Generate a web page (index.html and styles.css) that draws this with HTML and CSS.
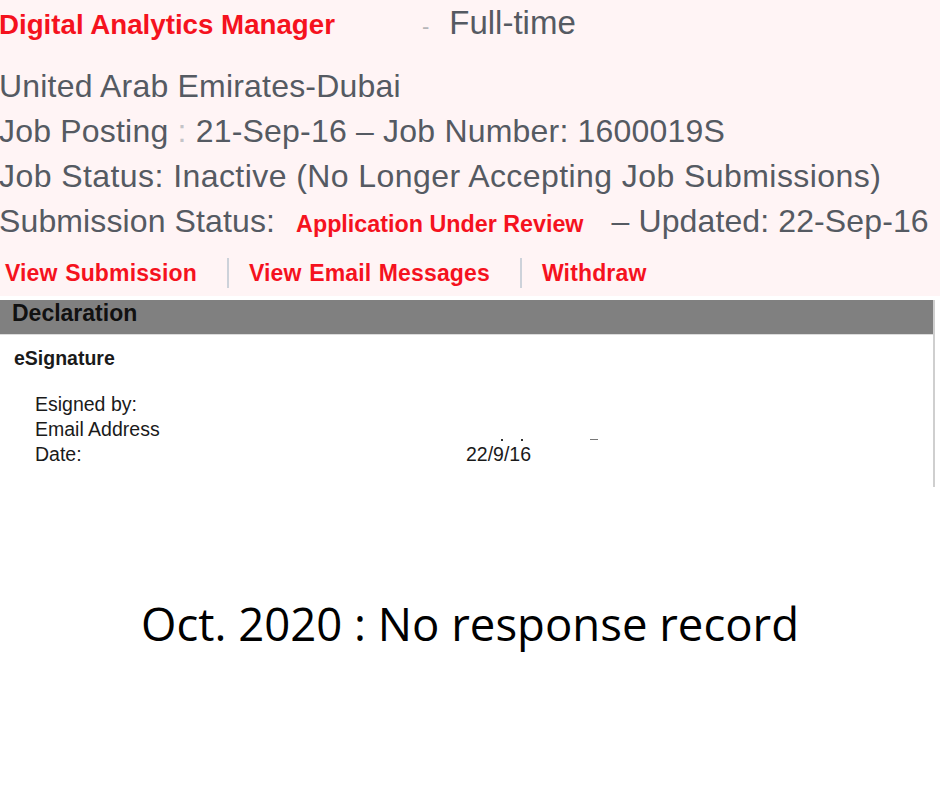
FILE: index.html
```html
<!DOCTYPE html>
<html lang="en">
<head>
    <meta charset="UTF-8">
    <meta name="viewport" content="width=device-width, initial-scale=1.0">
    <title>Job Submission</title>
    <link rel="stylesheet" href="styles.css">
</head>
<body>

    <div class="job">
        <div class="judul">
            <span class="nama-job">Digital Analytics Manager</span>
            <span class="strip">-</span>
            <span class="tipe">Full-time</span>
        </div>
        <div class="info">United Arab Emirates-Dubai</div>
        <div class="info">Job Posting <span class="titik">:</span> 21-Sep-16 &ndash; Job Number: 1600019S</div>
        <div class="info lebar">Job Status: Inactive (No Longer Accepting Job Submissions)</div>
        <div class="info sempit">Submission Status: <span class="status">Application Under Review</span> &ndash; Updated: 22-Sep-16</div>
        <div class="tautan">
            <a class="link">View Submission</a>
            <span class="pemisah"></span>
            <a class="link">View Email Messages</a>
            <span class="pemisah"></span>
            <a class="link">Withdraw</a>
        </div>
    </div>

    <div class="panel">
        <div class="panel-head">Declaration</div>
        <div class="sub-judul">eSignature</div>
        <div class="baris">
            <div>Esigned by:</div>
            <div></div>
            <div>Email Address</div>
            <div class="sisa"><i class="d1"></i><i class="d2"></i><i class="d3"></i></div>
            <div>Date:</div>
            <div>22/9/16</div>
        </div>
    </div>

    <div class="catatan">Oct. 2020 : No response record</div>

</body>
</html>
```

FILE: styles.css
```css
body {
    margin: 0;
    background: #fff;
    font-family: "Liberation Sans", Arial, sans-serif;
}

.job {
    background: #fff4f5;
    height: 296px;
    color: #555a62;
    overflow: hidden;
}

.judul {
    display: flex;
    align-items: baseline;
    height: 46px;
    line-height: 46px;
    margin-left: -1px;
}

.nama-job {
    color: #f5121e;
    font-weight: bold;
    font-size: 27.7px;
}

.strip {
    color: #b5b5b8;
    font-size: 22px;
    margin-left: 87px;
}

.tipe {
    font-size: 33px;
    margin-left: 20px;
}

.info {
    font-size: 32px;
    line-height: 45px;
    margin-left: -1px;
    letter-spacing: 0.2px;
    white-space: nowrap;
}

.info.lebar {
    letter-spacing: 0.43px;
}

.info.sempit {
    letter-spacing: 0.12px;
}

.judul + .info {
    margin-top: 18px;
}

.titik {
    color: #c4c4c8;
}

.status {
    color: #f5121e;
    font-weight: bold;
    font-size: 23.3px;
    letter-spacing: 0;
    margin: 0 19px 0 12px;
}

.tautan {
    display: flex;
    align-items: center;
    margin-top: 5px;
    height: 42px;
    padding-left: 5px;
}

.link {
    color: #f5121e;
    font-weight: bold;
    font-size: 23px;
    letter-spacing: 0.15px;
    word-spacing: 1px;
}

.pemisah {
    width: 2px;
    height: 30px;
    background: #cdd2da;
    margin: 0 20px 0 30px;
}

.panel {
    margin-top: 4px;
    width: 933px;
    height: 187px;
    border-right: 2px solid #cfcfcf;
    color: #1a1a1a;
}

.panel-head {
    background: #808080;
    height: 34px;
    line-height: 26px;
    border-bottom: 1px solid #dcdcdc;
    padding-left: 12px;
    font-weight: bold;
    font-size: 23px;
    color: #111;
}

.sub-judul {
    font-weight: bold;
    font-size: 19.5px;
    padding: 10px 0 0 14px;
    line-height: 26px;
}

.baris {
    display: grid;
    grid-template-columns: 431px 1fr;
    padding: 21px 0 0 35px;
    font-size: 19.5px;
    line-height: 25px;
}

.sisa {
    position: relative;
}

.sisa i {
    position: absolute;
    top: 22px;
    background: #333;
    height: 2px;
}

.sisa .d1 {
    left: 35px;
    width: 2px;
}

.sisa .d2 {
    left: 55px;
    width: 2px;
}

.sisa .d3 {
    left: 124px;
    width: 8px;
    height: 1px;
    background: #777;
}

.catatan {
    margin-top: 105px;
    text-align: center;
    font-family: "Open Sans", sans-serif;
    font-size: 45.5px;
    line-height: 62px;
    color: #000;
}
```
